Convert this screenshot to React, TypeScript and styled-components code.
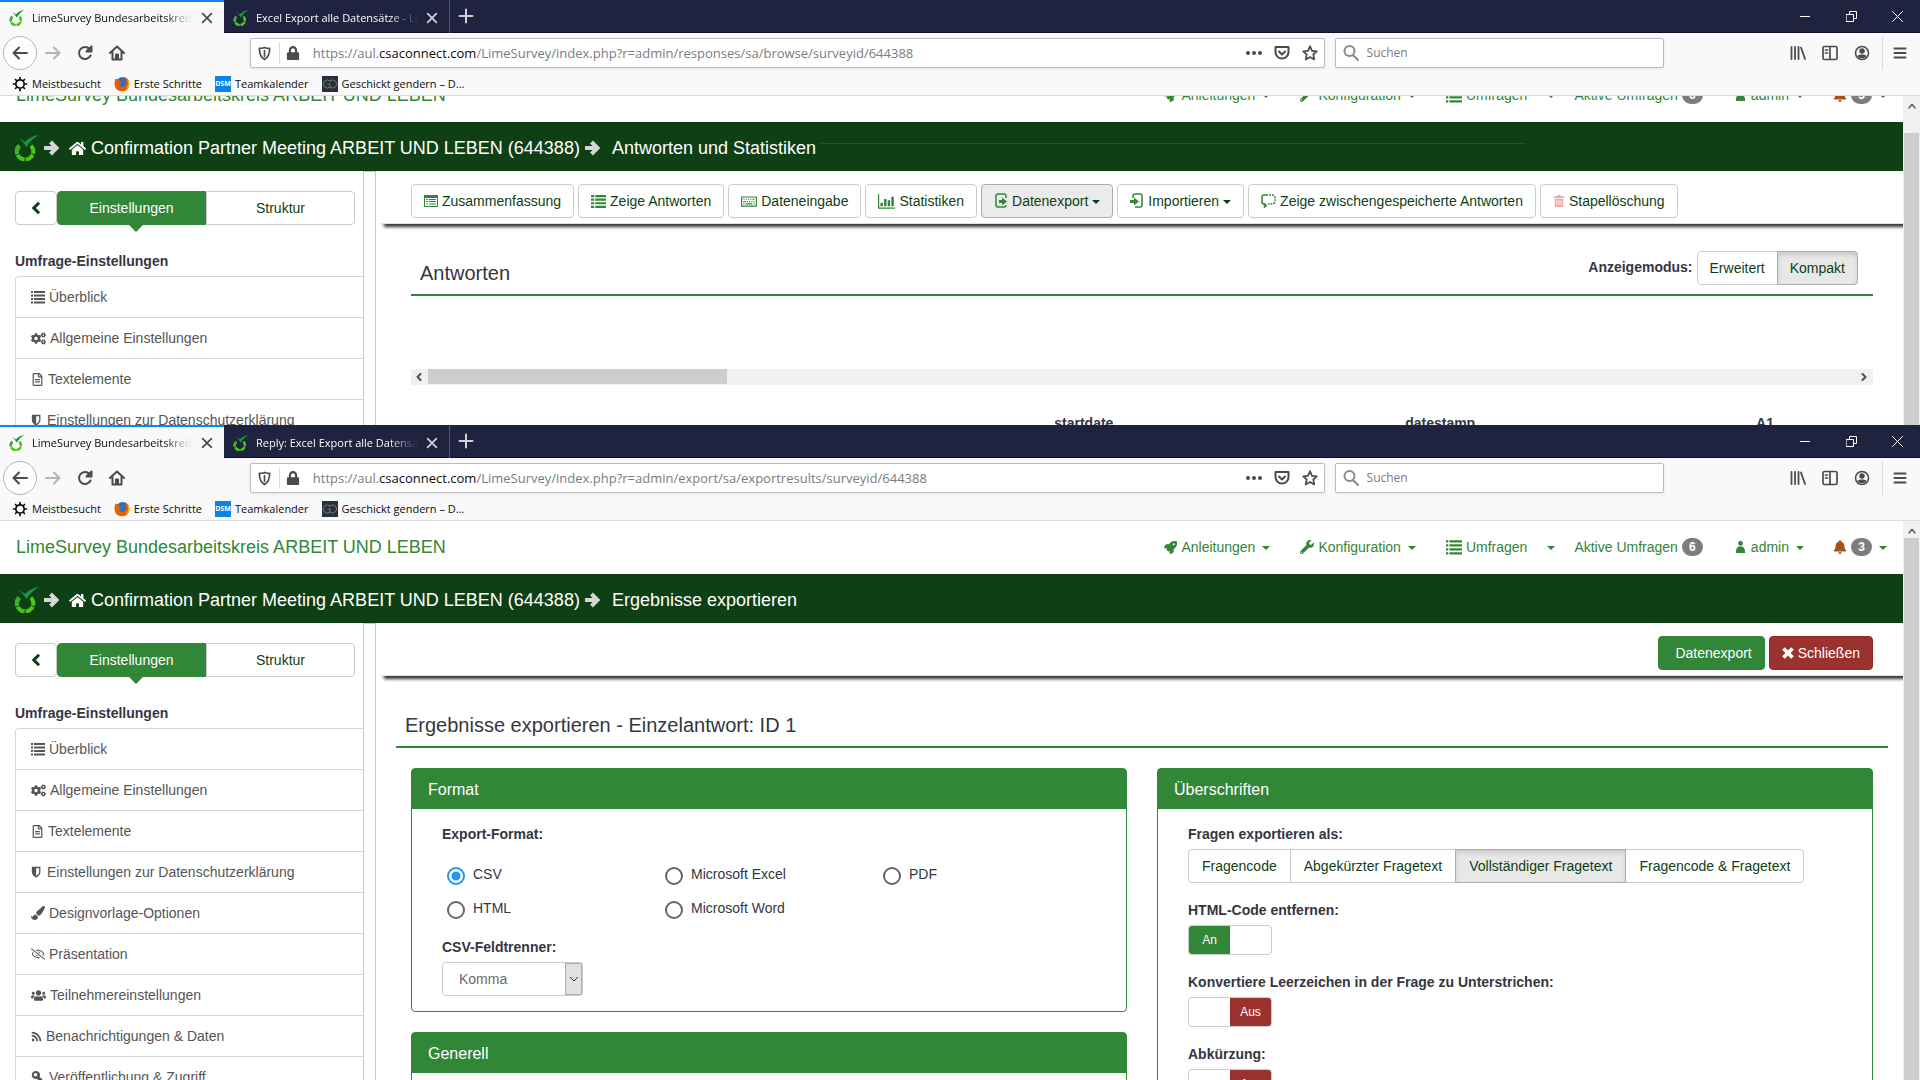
import React from "react";
import styled, { createGlobalStyle, css } from "styled-components";
import {
  FaCogs,
  FaRegFileAlt,
  FaPaintBrush,
  FaRegEyeSlash,
  FaUsers,
  FaRss,
  FaRocket,
  FaWrench,
  FaBell,
  FaHome,
  FaLock,
} from "react-icons/fa";

const green = "#328637";
const darkGreen = "#0f3f14";
const red = "#9c322e";

const GlobalStyle = createGlobalStyle`
  *, *::before, *::after { box-sizing: border-box; }
  body {
    margin: 0;
    background: #fff;
    color: #35363f;
    font: 14px/20px "Liberation Sans", Arial, sans-serif;
  }
  button, input, select { font: inherit; color: inherit; margin: 0; }
  svg { flex: none; display: block; }
  ul { list-style: none; margin: 0; padding: 0; }
`;

const Screen = styled.div`
  display: flex;
  flex-direction: column;
  height: 100vh;
  overflow: hidden;
`;

const Window = styled.section<{ $height?: string }>`
  flex: ${(p) => (p.$height ? `0 0 ${p.$height}` : "1 1 0")};
  min-height: 0;
  display: flex;
  flex-direction: column;
  overflow: hidden;
`;

/* ---------- browser chrome ---------- */

const Chrome = styled.div`
  flex: none;
  font-family: "Open Sans", "Noto Sans", sans-serif;
  color: #0c0c0d;
  background: #f9f9fa;
  border-bottom: 1px solid #dcdcde;
`;

const TabBar = styled.div`
  display: flex;
  height: 33px;
  background: #202340;
  border-bottom: 1px solid #0e1026;
`;

const Tab = styled.div<{ $active?: boolean }>`
  display: flex;
  align-items: center;
  gap: 7px;
  width: 226px;
  height: 33px;
  padding: 2px 10px 0 9px;
  font-size: 11px;
  border-right: 1px solid #555873;
  color: #f9f9fa;
  ${(p) =>
    p.$active &&
    css`
      width: 224px;
      background: #f9f9fa;
      color: #0c0c0d;
      border-right: 0;
      box-shadow: inset 0 2px 0 #0a84ff;
    `}
`;

const TabTitle = styled.button`
  flex: 1;
  min-width: 0;
  height: 24px;
  padding: 0;
  border: 0;
  background: none;
  text-align: left;
  white-space: nowrap;
  overflow: hidden;
  mask-image: linear-gradient(to right, #000 82%, transparent 100%);
`;

const PlainButton = styled.button<{ $width?: number; $color?: string }>`
  display: flex;
  align-items: center;
  justify-content: center;
  width: ${(p) => p.$width ?? 32}px;
  padding: 0;
  border: 0;
  background: none;
  color: ${(p) => p.$color ?? "#4a4a4f"};
`;

const WindowControls = styled.div`
  display: flex;
  margin-left: auto;
`;

const NavBar = styled.div`
  display: flex;
  align-items: center;
  height: 40px;
  padding: 0 3px;
`;

const BackButton = styled.button`
  display: flex;
  align-items: center;
  justify-content: center;
  width: 34px;
  height: 34px;
  padding: 0;
  border: 1px solid #b5b5b7;
  border-radius: 50%;
  background: #fdfdfd;
  color: #4a4a4f;
`;

const Field = styled.div<{ $grow: number }>`
  display: flex;
  align-items: center;
  flex: ${(p) => p.$grow} 1 0;
  min-width: 0;
  height: 30px;
  border: 1px solid #bcbcbe;
  border-radius: 2px;
  background: #fff;
  box-shadow: 0 1px 3px rgba(0, 0, 0, 0.08);
  font-size: 13px;
  color: #7c7c80;
`;

const Address = styled.span`
  flex: 1;
  min-width: 0;
  margin-left: 6px;
  white-space: nowrap;
  overflow: hidden;
  b {
    font-weight: 400;
    color: #0c0c0d;
  }
`;

const SearchInput = styled.input`
  flex: 1;
  min-width: 0;
  border: 0;
  padding: 0;
  outline: 0;
  background: none;
  font-size: 12px;
  &::placeholder {
    color: #7c7c80;
    opacity: 1;
  }
`;

const Rule = styled.span<{ $height: number }>`
  width: 1px;
  height: ${(p) => p.$height}px;
  background: #dcdcde;
`;

const Spacer = styled.div<{ $grow: number }>`
  flex: ${(p) => p.$grow} 1 0;
`;

const Bookmarks = styled.nav`
  display: flex;
  align-items: flex-start;
  gap: 13px;
  height: 22px;
  padding: 1px 12px 0;
  font-size: 11px;
  line-height: 20px;
`;

const Bookmark = styled.a`
  display: flex;
  align-items: center;
  gap: 4px;
  height: 19px;
  color: #0c0c0d;
  text-decoration: none;
`;

const TextBadge = styled.span<{ $bg: string; $fg: string }>`
  display: flex;
  align-items: center;
  justify-content: center;
  width: 16px;
  height: 16px;
  background: ${(p) => p.$bg};
  color: ${(p) => p.$fg};
  font-size: 7px;
  font-weight: 700;
`;

/* ---------- drawings ---------- */

const LimeLogo = ({ size }: { size: number }) => (
  <svg width={size} height={size} viewBox="0 0 26 27" fill="none">
    <path d="M5 11A8.500 8.500 0 1 0 17 11" stroke="#48c614" strokeWidth="4.200" strokeDasharray="9.250 1" />
    <path d="M5 11A8.500 8.500 0 0 0 2.600 18" stroke="#35b02c" strokeWidth="4.200" />
    <path d="M4.500 3 11 7Q17 1 25.500 0 17 4.500 12.500 12.500 9.500 7 4.500 3Z" fill="#149a3c" />
  </svg>
);

const Stroke = ({
  d,
  size = 16,
  width = 2,
  box = 16,
  sharp,
}: {
  d: string;
  size?: number;
  width?: number;
  box?: number;
  sharp?: boolean;
}) => (
  <svg
    width={size}
    height={size}
    viewBox={`0 0 ${box} ${box}`}
    fill="none"
    stroke="currentColor"
    strokeWidth={width}
    strokeLinecap={sharp ? "butt" : "round"}
    strokeLinejoin={sharp ? "miter" : "round"}
  >
    <path d={d} />
  </svg>
);

const Fill = ({ d, size = 14 }: { d: string; size?: number }) => (
  <svg width={size} height={size} viewBox="0 0 14 14" fill="currentColor" fillRule="evenodd">
    <path d={d} />
  </svg>
);

const paths = {
  list: "M0 1h2v2H0zM3 1h11v2H3zM0 4.500h2v2H0zM3 4.500h11v2H3zM0 8h2v2H0zM3 8h11v2H3zM0 11.500h2v2H0zM3 11.500h11v2H3z",
  thickList:
    "M0 1h3v2H0zM4 1h10v2H4zM0 4.300h3v2H0zM4 4.300h10v2H4zM0 7.600h3v2H0zM4 7.600h10v2H4zM0 11h3v2H0zM4 11h10v2H4z",
  table:
    "M0 1h14v12H0zM1 4v8h12V4zM2 5h2v1H2zM5 5h7v1H5zM2 7h2v1H2zM5 7h7v1H5zM2 9.500h2v1H2zM5 9.500h7v1H5z",
  keyboard:
    "M0 3h14v9H0zM1 4v7h12V4zM2 5h1v1H2zM4 5h1v1H4zM6 5h1v1H6zM8 5h1v1H8zM10 5h2v1h-2zM2 7h2v1H2zM5 7h1v1H5zM7 7h1v1H7zM9 7h1v1H9zM11 7h1v1h-1zM2 9h1v1H2zM4 9h6v1H4zM11 9h1v1h-1z",
  chart: "M0 1h1v11h13v1H0zM2 8h2v3H2zM5 5h2v6H5zM8 6h2v5H8zM11 3h2v8h-2z",
  shield: "M1 1h10v6c0 3-2 5-5 6.500C3 12 1 10 1 7zM6 2.500v9C8.500 10.200 9.500 8.800 9.500 7V2.500z",
  person: "M7 0a2.600 2.600 0 1 1 0 5.200A2.600 2.600 0 0 1 7 0zM5 6h4c2 1 3 3 3 7H2c0-4 1-6 3-7z",
  trash: "M5 0h4v1.500h4V3.500H1V1.500h4zM2 4.500h10V14H2zM4 6v6h1V6zM6.500 6v6h1V6zM9 6v6h1V6z",
  key: "M5 1a4 4 0 0 1 3.600 5.700L14 12l-2 2-1.500-1.500-1 1L8 12l-1-2-1-1.200A4 4 0 1 1 5 1zM4.500 3a1.800 1.800 0 1 0 0 3.600 1.800 1.800 0 0 0 0-3.600z",
};

const CrumbIcon = () => (
  <Stroke size={16} width={4} sharp d="M0 8h12M6.500 2l6 6-6 6" />
);

const ExportIcon = ({ back }: { back?: boolean }) => (
  <svg width="14" height="16" viewBox="0 0 14 16" fill="none" stroke={green} strokeWidth="1.500">
    <path d={back ? "M3 5V3a2 2 0 0 1 2-2h5a2 2 0 0 1 2 2v9a2 2 0 0 1-2 2H5" : "M12 5V3a2 2 0 0 0-2-2H4a2 2 0 0 0-2 2v9a2 2 0 0 0 2 2h6a2 2 0 0 0 2-2"} />
    <path d={back ? "M0 7h4V4.500L9 8.500 4 12.500V10H0z" : "M5 7h3V4.500l5 4-5 4V10H5z"} fill={green} stroke="none" />
  </svg>
);

const CommentIcon = () => (
  <svg width="15" height="16" viewBox="0 0 15 16" fill="none" stroke={green} strokeWidth="1.500">
    <path d="M5 11H3a2 2 0 0 1-2-2V4a2 2 0 0 1 2-2h2M3.500 11v3L6 12" />
    <path d="M5 2h7a2 2 0 0 1 2 2v4a3 3 0 0 1-3 3H7" strokeDasharray="2 1" />
  </svg>
);

const FirefoxIcon = () => (
  <svg width="16" height="16" viewBox="0 0 16 16">
    <circle cx="8.500" cy="7.500" r="6.500" fill="#2d6fc4" />
    <path d="M1.500 2.500C2.500 3.500 4 3 5.500 4 4.500 5 6 6 7.500 6.500 6.500 8 5 8 5.500 9.500c1.500 2.500 5 1.500 6-1C13 6 12 3.500 10.500 1c4 1.500 5.500 5 4.800 8.500A7.500 7.500 0 0 1 .600 9C.300 6.500 1 4.500 1.500 2.500z" fill="#e66000" />
    <path d="M13 3.500c2 3 1.500 7-1.500 9 3 0 4.500-3 4-5.500-.300-1.500-1-2.800-2.500-3.500z" fill="#ffb700" />
  </svg>
);

const CloseGlyph = () => <Stroke size={14} width={2} d="M3 3l10 10M13 3L3 13" />;

const BrowserChrome = ({ second, path }: { second: string; path: string }) => (
  <Chrome>
    <TabBar role="tablist">
      <Tab $active>
        <LimeLogo size={16} />
        <TabTitle role="tab" aria-selected="true">LimeSurvey Bundesarbeitskreis ARBEIT</TabTitle>
        <PlainButton $width={14} aria-label="Tab schließen"><CloseGlyph /></PlainButton>
      </Tab>
      <Tab>
        <LimeLogo size={16} />
        <TabTitle role="tab" aria-selected="false">{second}</TabTitle>
        <PlainButton $width={14} $color="#d0d0da" aria-label="Tab schließen"><CloseGlyph /></PlainButton>
      </Tab>
      <PlainButton $color="#d0d0da" aria-label="Neuer Tab">
        <Stroke d="M8 1.500v13M1.500 8h13" width={2} />
      </PlainButton>
      <WindowControls>
        <PlainButton $width={46} $color="#fff" aria-label="Minimieren">
          <Stroke size={10} width={1} box={10} d="M0 5.500h10" />
        </PlainButton>
        <PlainButton $width={46} $color="#fff" aria-label="Verkleinern">
          <Stroke size={11} width={1} box={11} d="M.500 3.500h7v7h-7zM3.500 3.500v-3h7v7h-3" />
        </PlainButton>
        <PlainButton $width={46} $color="#fff" aria-label="Schließen">
          <Stroke size={11} width={1} box={11} d="M.500.500l10 10M10.500.500l-10 10" />
        </PlainButton>
      </WindowControls>
    </TabBar>
    <NavBar>
      <BackButton aria-label="Zurück">
        <Stroke d="M15 8H1.500M7 2.500L1.500 8 7 13.500" />
      </BackButton>
      <PlainButton $color="#b4b4b6" aria-label="Vor">
        <Stroke d="M1 8h13.500M9 2.500L14.500 8 9 13.500" />
      </PlainButton>
      <PlainButton aria-label="Neu laden">
        <Stroke d="M13.500 10.500A6 6 0 1 1 12.500 4M14.500 1.500V6.500H9.500zM14 3l-3 3" />
      </PlainButton>
      <PlainButton aria-label="Startseite">
        <Stroke d="M1 8L8 1.500 15 8M3.500 7v7.500h9V7M7 14V9.500h2v4.500" />
      </PlainButton>
      <Spacer $grow={117} />
      <Field $grow={1074}>
        <PlainButton $width={28} aria-label="Schutz">
          <Stroke size={15} width={1.8} d="M8 1.500c2 1 3.500 1 5.500 1 0 6-1 9.500-5.500 12-4.500-2.500-5.500-6-5.500-12 2 0 3.500 0 5.500-1zM8 5v6" />
        </PlainButton>
        <Rule $height={22} />
        <PlainButton $width={27} aria-label="Verbindung">
          <FaLock size={14} />
        </PlainButton>
        <Address>
          https://aul.<b>csaconnect.com</b>
          {path}
        </Address>
        <PlainButton $width={28} aria-label="Seitenaktionen">
          <svg width="16" height="4" viewBox="0 0 16 4" fill="currentColor">
            <circle cx="2" cy="2" r="2" />
            <circle cx="8" cy="2" r="2" />
            <circle cx="14" cy="2" r="2" />
          </svg>
        </PlainButton>
        <PlainButton $width={28} aria-label="Pocket">
          <Stroke d="M1.500 2h13v5a6.500 6.500 0 0 1-13 0zM5 6.500l3 3 3-3" />
        </PlainButton>
        <PlainButton $width={28} aria-label="Lesezeichen">
          <Stroke d="M8 1.200l2 4.600 4.800.500-3.500 3.200 1 5L8 12l-4.300 2.500 1-5L1.200 6.300 6 5.800z" width={1.7} />
        </PlainButton>
      </Field>
      <Spacer $grow={10} />
      <Field $grow={328}>
        <PlainButton $width={31} $color="#8a8a8e" aria-label="Suche starten">
          <Stroke d="M6.500 1a5 5 0 1 1 0 10 5 5 0 0 1 0-10zM10 10l5 5" />
        </PlainButton>
        <SearchInput aria-label="Suchen" placeholder="Suchen" />
      </Field>
      <Spacer $grow={118} />
      <PlainButton aria-label="Bibliothek">
        <Stroke d="M1.500 2v12M5 2v12M8.500 2v12M11 2.500l4 11.500" width={1.8} />
      </PlainButton>
      <PlainButton aria-label="Seitenleiste">
        <Stroke d="M2.500 1.500h11a1.500 1.500 0 0 1 1.500 1.500v10a1.500 1.500 0 0 1-1.500 1.500h-11A1.500 1.500 0 0 1 1 13V3a1.500 1.500 0 0 1 1.500-1.500zM8 2v12M3.500 5h2M3.500 8h2" width={1.7} />
      </PlainButton>
      <PlainButton aria-label="Konto">
        <svg width="16" height="16" viewBox="0 0 16 16">
          <circle cx="8" cy="8" r="6.500" fill="none" stroke="currentColor" strokeWidth="1.500" />
          <circle cx="8" cy="6" r="2.700" fill="currentColor" />
          <path d="M3.500 11c1-2 8-2 9 0-2 3-7 3-9 0z" fill="currentColor" />
        </svg>
      </PlainButton>
      <Spacer $grow={4} />
      <Rule $height={34} />
      <PlainButton $width={34} aria-label="Menü">
        <Stroke d="M2.500 3.500h11M2.500 8h11M2.500 12.500h11" />
      </PlainButton>
    </NavBar>
    <Bookmarks>
      <Bookmark href="#">
        <Stroke size={16} width={1.7} d="M8 3.800a4.200 4.200 0 1 1 0 8.400 4.200 4.200 0 0 1 0-8.400zM8 1.500v2M8 12.500v2M1.500 8h2M12.500 8h2M3.500 3.500l1 1M11.500 11.500l1 1M3.500 12.500l1-1M11.500 4.500l1-1" />
        Meistbesucht
      </Bookmark>
      <Bookmark href="#">
        <FirefoxIcon />
        Erste Schritte
      </Bookmark>
      <Bookmark href="#">
        <TextBadge $bg="#0a84e8" $fg="#fff">DSM</TextBadge>
        Teamkalender
      </Bookmark>
      <Bookmark href="#">
        <TextBadge $bg="#2b2f3a" $fg="#6d7f80">
          <Stroke d="M8 5a4 4 0 1 0 0 6V8H6M8 5a4 4 0 1 1 0 6" width={1} />
        </TextBadge>
        Geschickt gendern – D...
      </Bookmark>
    </Bookmarks>
  </Chrome>
);

/* ---------- page frame ---------- */

const Viewport = styled.div`
  flex: 1;
  min-height: 0;
  display: flex;
  overflow: hidden;
`;

const Page = styled.div<{ $scrolled?: boolean }>`
  flex: 1;
  min-width: 0;
  display: flex;
  flex-direction: column;
  overflow: hidden;
  margin-top: ${(p) => (p.$scrolled ? -27 : 0)}px;
`;

const ScrollTrack = styled.div<{ $gap: number }>`
  display: flex;
  flex-direction: column;
  align-items: center;
  width: 17px;
  padding: 4px 1px 0;
  background: #f0f0f0;
  color: #505050;
  &::after {
    content: "";
    flex: 1;
    width: 100%;
    margin-top: ${(p) => p.$gap}px;
    background: #cdcdcd;
  }
`;

const TopNav = styled.header`
  flex: none;
  display: flex;
  align-items: center;
  justify-content: space-between;
  height: 53px;
  padding: 0 1px 1px 16px;
  color: ${green};
`;

const Brand = styled.a`
  font-size: 18px;
  color: ${green};
  text-decoration: none;
`;

const NavItems = styled.ul`
  display: flex;
`;

const NavItem = styled.li<{ $pad?: number }>`
  padding: 0 ${(p) => p.$pad ?? 15}px;
`;

const NavLink = styled.a`
  display: flex;
  align-items: center;
  gap: 4px;
  min-height: 20px;
  color: ${green};
  text-decoration: none;
`;

const Caret = styled.span`
  border: 4px solid transparent;
  border-top-color: currentColor;
  border-bottom: 0;
  margin: 2px 0 0 3px;
`;

const ButtonCaret = styled(Caret)`
  margin-left: 0;
`;

const Count = styled.span`
  min-width: 21px;
  padding: 3px 7px;
  border-radius: 10px;
  background: #7d7d7d;
  color: #fff;
  font-size: 12px;
  line-height: 12px;
  font-weight: 700;
  text-align: center;
`;

const Crumbs = styled.div`
  flex: none;
  display: flex;
  align-items: center;
  height: 49px;
  padding: 3px 0 0 14px;
  background: ${darkGreen};
  color: #fff;
  font-size: 18px;
  white-space: nowrap;
`;

const Crumb = styled.a<{ $left: number }>`
  display: flex;
  align-items: center;
  gap: 5px;
  padding: 0 5px 0 ${(p) => p.$left}px;
  color: #fff;
  text-decoration: none;
`;

const CrumbArrow = styled.span<{ $left?: number }>`
  padding-left: ${(p) => p.$left ?? 0}px;
  color: #d6d6d6;
`;

const Seam = styled.hr`
  flex: 1;
  align-self: flex-start;
  height: 1px;
  margin: 18px 20% 0 0;
  border: 0;
  background: #24552a;
`;

const Columns = styled.div`
  flex: 1;
  display: flex;
  min-height: 0;
`;

const Sidebar = styled.aside`
  flex: none;
  width: 363px;
  padding: 20px 0 0 15px;
`;

const Handle = styled.div`
  flex: none;
  width: 13px;
  border: 1px solid #c8c8ca;
  border-bottom: 0;
`;

const SwitchRow = styled.div`
  display: flex;
  margin-right: 8px;
`;

const SideButton = styled.button<{ $active?: boolean; $fixed?: boolean }>`
  position: relative;
  display: flex;
  align-items: center;
  justify-content: center;
  flex: ${(p) => (p.$fixed ? "0 0 42px" : "1 1 0")};
  height: 34px;
  padding: 0;
  border: 1px solid ${(p) => (p.$active ? green : "#ccc")};
  border-radius: ${(p) => (p.$fixed ? "4px" : p.$active ? "4px 0 0 4px" : "0 4px 4px 0")};
  background: ${(p) => (p.$active ? green : "#fff")};
  color: ${(p) => (p.$active ? "#fff" : "#0f3f14")};
  &::after {
    content: "";
    display: ${(p) => (p.$active ? "block" : "none")};
    position: absolute;
    top: 100%;
    left: calc(50% - 4px);
    border: 8px solid transparent;
    border-top-color: ${green};
    border-bottom: 0;
  }
`;

const SideHeading = styled.h2`
  margin: 26px 0 5px;
  font-size: 14px;
  line-height: 20px;
`;

const SideList = styled.ul`
  border: 1px solid #d6d6d6;
  border-right: 0;
  border-top-left-radius: 4px;
`;

const SideLink = styled.a`
  display: flex;
  align-items: center;
  gap: 4px;
  height: 41px;
  padding-left: 15px;
  border-bottom: 1px solid #d6d6d6;
  color: #555;
  text-decoration: none;
`;

const Main = styled.main`
  flex: 1;
  min-width: 0;
  overflow: hidden;
`;

const Toolbar = styled.div<{ $end?: boolean }>`
  display: flex;
  gap: 4px;
  justify-content: ${(p) => (p.$end ? "flex-end" : "flex-start")};
  height: 53px;
  margin-left: 5px;
  padding: 13px 30px 0;
  border-bottom: 1px solid #dfe0e6;
  box-shadow: 3px 3px 3px #35363f;
`;

const Button = styled.button<{ $tone?: "active" | "green" | "red" }>`
  display: flex;
  align-items: center;
  gap: 4px;
  height: 34px;
  padding: 0 12px;
  border: 1px solid #ccc;
  border-radius: 4px;
  background: #fff;
  color: ${darkGreen};
  white-space: nowrap;
  ${(p) => p.$tone === "active" && "background: #ebebeb; border-color: #adadad;"}
  ${(p) => p.$tone === "green" && `background: ${green}; border-color: ${green}; color: #fff; padding-left: 16px;`}
  ${(p) => p.$tone === "red" && `background: ${red}; border-color: #8a2b28; color: #fff;`}
`;

const Tint = styled.span<{ $faded?: boolean }>`
  color: ${(p) => (p.$faded ? "#e8a9a9" : green)};
`;

const Segment = styled.button<{ $on?: boolean }>`
  height: 34px;
  margin-right: -1px;
  padding: 0 12px;
  border: 1px solid ${(p) => (p.$on ? "#adadad" : "#ccc")};
  background: ${(p) => (p.$on ? "#e8e8e8" : "#fff")};
  color: ${darkGreen};
  white-space: nowrap;
  box-shadow: ${(p) => (p.$on ? "inset 0 3px 5px rgba(0, 0, 0, 0.125)" : "none")};
  z-index: ${(p) => (p.$on ? 1 : 0)};
  &:first-child {
    border-radius: 4px 0 0 4px;
  }
  &:last-child {
    margin-right: 0;
    border-radius: 0 4px 4px 0;
  }
`;

const Segments = styled.div<{ $roomy?: boolean }>`
  display: flex;
  ${Segment} {
    padding: 0 ${(p) => (p.$roomy ? 13 : 12)}px;
  }
`;

const Content = styled.div<{ $wide?: boolean }>`
  padding: 27px ${(p) => (p.$wide ? "15px 0 20px" : "30px 0 35px")};
`;

const TitleRow = styled.div`
  display: flex;
  justify-content: space-between;
  height: 45px;
  padding: 0 15px 0 9px;
  border-bottom: 2px solid ${green};
`;

const Title = styled.h1`
  margin: 11px 0 0;
  font-size: 20px;
  line-height: 22px;
  font-weight: 400;
`;

const Mode = styled.div`
  display: flex;
  gap: 4px;
  font-weight: 700;
  line-height: 32px;
  ${Segment} {
    font-weight: 400;
  }
`;

const SideScroll = styled.div`
  display: flex;
  align-items: center;
  height: 16px;
  margin: 73px 0 28px;
  padding: 0 5px 0 4px;
  background: #f0f0f0;
  color: #505050;
`;

const SideThumb = styled.div`
  flex: 0 0 299px;
  height: 16px;
  margin: 0 auto 0 5px;
  border-bottom: 1px solid #f0f0f0;
  background: #cdcdcd;
`;

const Answers = styled.table`
  width: 100%;
  table-layout: fixed;
  border-collapse: collapse;
  th {
    padding: 0;
    text-align: left;
  }
`;

const Panels = styled.div`
  display: grid;
  grid-template-columns: 1fr 1fr;
  gap: 30px;
  padding: 20px 15px 0;
`;

const Panel = styled.section`
  margin-bottom: 20px;
  border: 1px solid ${green};
  border-radius: 4px;
`;

const PanelHead = styled.h2`
  margin: 0;
  padding: 11px 16px 9px;
  background: ${green};
  color: #fff;
  font-size: 16px;
  line-height: 20px;
  font-weight: 400;
`;

const PanelBody = styled.div`
  display: flex;
  flex-direction: column;
  gap: 17px;
  padding: 15px 30px;
`;

const FormRow = styled.div`
  display: flex;
  flex-direction: column;
  align-items: flex-start;
  gap: 5px;
`;

const Label = styled.label`
  font-weight: 700;
`;

const RadioGrid = styled.div`
  display: grid;
  grid-template-columns: repeat(3, 218px);
  gap: 12px 0;
  padding-top: 15px;
`;

const RadioLabel = styled.label`
  display: flex;
  height: 22px;
`;

const Radio = styled.input`
  appearance: none;
  flex: none;
  width: 18px;
  height: 18px;
  margin: 3px 8px 0 5px;
  border: 2px solid #666;
  border-radius: 50%;
  &:checked {
    border-color: #2196f3;
    background: radial-gradient(circle, #2196f3 4px, #fff 5px);
  }
`;

const SelectBox = styled.div`
  display: flex;
  height: 34px;
  position: relative;
  width: 141px;
`;

const Select = styled.select`
  appearance: none;
  width: 100%;
  padding: 0 16px;
  border: 1px solid #ccc;
  border-radius: 4px;
  background: #fff;
  color: #6b6b6b;
`;

const SelectArrow = styled.span`
  position: absolute;
  top: 1px;
  right: 1px;
  bottom: 1px;
  display: flex;
  align-items: center;
  justify-content: center;
  width: 17px;
  border: 1px solid #adadad;
  background: #e1e1e1;
  pointer-events: none;
`;

const Toggle = styled.button<{ $on: boolean }>`
  display: flex;
  justify-content: ${(p) => (p.$on ? "flex-start" : "flex-end")};
  width: 84px;
  height: 30px;
  padding: 0;
  border: 1px solid #ccc;
  border-radius: 4px;
  background: #fff;
  overflow: hidden;
  span {
    width: 41px;
    background: ${(p) => (p.$on ? green : red)};
    color: #fff;
    font-size: 12px;
    line-height: 28px;
  }
`;

const sideItems = [
  { icon: <Fill d={paths.list} />, label: "Überblick" },
  { icon: <FaCogs size={15} />, label: "Allgemeine Einstellungen" },
  { icon: <FaRegFileAlt size={13} />, label: "Textelemente" },
  { icon: <Fill d={paths.shield} size={12} />, label: "Einstellungen zur Datenschutzerklärung" },
  { icon: <FaPaintBrush size={14} />, label: "Designvorlage-Optionen" },
  { icon: <FaRegEyeSlash size={14} />, label: "Präsentation" },
  { icon: <FaUsers size={15} />, label: "Teilnehmereinstellungen" },
  { icon: <FaRss size={11} />, label: "Benachrichtigungen & Daten" },
  { icon: <Fill d={paths.key} />, label: "Veröffentlichung & Zugriff" },
];

const Frame = ({
  scrolled,
  crumb,
  items,
  children,
}: {
  scrolled?: boolean;
  crumb: string;
  items: typeof sideItems;
  children: React.ReactNode;
}) => (
  <Viewport>
    <Page $scrolled={scrolled}>
      <TopNav>
        <Brand href="#">LimeSurvey Bundesarbeitskreis ARBEIT UND LEBEN</Brand>
        <NavItems>
          <NavItem><NavLink href="#"><FaRocket size={13} />Anleitungen<Caret /></NavLink></NavItem>
          <NavItem><NavLink href="#"><FaWrench size={14} />Konfiguration<Caret /></NavLink></NavItem>
          <NavItem><NavLink href="#"><Fill d={paths.list} size={16} />Umfragen</NavLink></NavItem>
          <NavItem $pad={2}><NavLink href="#" aria-label="Umfragen öffnen"><Caret /></NavLink></NavItem>
          <NavItem $pad={17}><NavLink href="#">Aktive Umfragen<Count>6</Count></NavLink></NavItem>
          <NavItem $pad={14}><NavLink href="#"><Fill d={paths.person} size={13} />admin<Caret /></NavLink></NavItem>
          <NavItem><NavLink href="#"><FaBell size={14} color="#a8511f" /><Count>3</Count><Caret /></NavLink></NavItem>
        </NavItems>
      </TopNav>
      <Crumbs>
        <LimeLogo size={26} />
        <CrumbArrow $left={4}><CrumbIcon /></CrumbArrow>
        <Crumb href="#" $left={9}><FaHome size={17} />Confirmation Partner Meeting ARBEIT UND LEBEN (644388)</Crumb>
        <CrumbArrow><CrumbIcon /></CrumbArrow>
        <Crumb href="#" $left={11}>{crumb}</Crumb>
        {scrolled && <Seam />}
      </Crumbs>
      <Columns>
        <Sidebar>
          <SwitchRow>
            <SideButton $fixed aria-label="Einklappen">
              <Stroke size={14} width={3.5} sharp d="M11.500 2L5.500 8l6 6" />
            </SideButton>
            <SideButton $active>Einstellungen</SideButton>
            <SideButton>Struktur</SideButton>
          </SwitchRow>
          <SideHeading>Umfrage-Einstellungen</SideHeading>
          <SideList>
            {items.map((item) => (
              <li key={item.label}>
                <SideLink href="#">{item.icon}{item.label}</SideLink>
              </li>
            ))}
          </SideList>
        </Sidebar>
        <Handle />
        <Main>{children}</Main>
      </Columns>
    </Page>
    <ScrollTrack $gap={scrolled ? 21 : 1}>
      <Stroke size={12} width={2} d="M4 10.500l4-4.500 4 4.500" />
    </ScrollTrack>
  </Viewport>
);

const AnswersView = () => (
  <>
    <Toolbar>
      <Button><Tint><Fill d={paths.table} /></Tint>Zusammenfassung</Button>
      <Button><Tint><Fill d={paths.thickList} size={15} /></Tint>Zeige Antworten</Button>
      <Button><Tint><Fill d={paths.keyboard} size={16} /></Tint>Dateneingabe</Button>
      <Button><Tint><Fill d={paths.chart} size={17} /></Tint>Statistiken</Button>
      <Button $tone="active"><ExportIcon />Datenexport<ButtonCaret /></Button>
      <Button><ExportIcon back />Importieren<ButtonCaret /></Button>
      <Button><CommentIcon />Zeige zwischengespeicherte Antworten</Button>
      <Button><Tint $faded><Fill d={paths.trash} size={12} /></Tint>Stapellöschung</Button>
    </Toolbar>
    <Content>
      <TitleRow>
        <Title>Antworten</Title>
        <Mode>
          Anzeigemodus:
          <Segments>
            <Segment>Erweitert</Segment>
            <Segment $on>Kompakt</Segment>
          </Segments>
        </Mode>
      </TitleRow>
      <SideScroll>
        <Stroke size={8} box={8} width={2} d="M5.500 1l-3 3 3 3" />
        <SideThumb />
        <Stroke size={8} box={8} width={2} d="M2.500 1l3 3-3 3" />
      </SideScroll>
      <Answers>
        <colgroup>
          <col width="44%" />
          <col width="24%" />
          <col width="24%" />
          <col />
        </colgroup>
        <thead>
          <tr>
            <th />
            <th>startdate</th>
            <th>datestamp</th>
            <th>A1</th>
          </tr>
        </thead>
      </Answers>
    </Content>
  </>
);

const formats = ["CSV", "Microsoft Excel", "PDF", "HTML", "Microsoft Word"];
const toggles = [
  { id: "strip", label: "HTML-Code entfernen:", on: true },
  { id: "convert", label: "Konvertiere Leerzeichen in der Frage zu Unterstrichen:", on: false },
  { id: "abbrev", label: "Abkürzung:", on: false },
];

const ExportView = () => (
  <>
    <Toolbar $end>
      <Button $tone="green">Datenexport</Button>
      <Button $tone="red">
        <Stroke size={12} width={5} sharp d="M2 2l12 12M14 2L2 14" />
        Schließen
      </Button>
    </Toolbar>
    <Content $wide>
      <TitleRow>
        <Title>Ergebnisse exportieren - Einzelantwort: ID 1</Title>
      </TitleRow>
      <Panels>
        <div>
          <Panel>
            <PanelHead>Format</PanelHead>
            <PanelBody>
              <FormRow>
                <Label as="span">Export-Format:</Label>
                <RadioGrid>
                  {formats.map((format) => (
                    <RadioLabel key={format}>
                      <Radio type="radio" name="format" defaultChecked={format === "CSV"} />
                      {format}
                    </RadioLabel>
                  ))}
                </RadioGrid>
              </FormRow>
              <FormRow>
                <Label htmlFor="separator">CSV-Feldtrenner:</Label>
                <SelectBox>
                  <Select id="separator"><option>Komma</option></Select>
                  <SelectArrow><Stroke size={8} box={8} width={1} d="M0 2l4 4 4-4" /></SelectArrow>
                </SelectBox>
              </FormRow>
            </PanelBody>
          </Panel>
          <Panel>
            <PanelHead>Generell</PanelHead>
            <PanelBody />
          </Panel>
        </div>
        <Panel>
          <PanelHead>Überschriften</PanelHead>
          <PanelBody>
            <FormRow>
              <Label as="span">Fragen exportieren als:</Label>
              <Segments $roomy>
                <Segment>Fragencode</Segment>
                <Segment>Abgekürzter Fragetext</Segment>
                <Segment $on>Vollständiger Fragetext</Segment>
                <Segment>Fragencode &amp; Fragetext</Segment>
              </Segments>
            </FormRow>
            {toggles.map((t) => (
              <FormRow key={t.id}>
                <Label htmlFor={t.id}>{t.label}</Label>
                <Toggle id={t.id} role="switch" aria-checked={t.on} $on={t.on}>
                  <span>{t.on ? "An" : "Aus"}</span>
                </Toggle>
              </FormRow>
            ))}
          </PanelBody>
        </Panel>
      </Panels>
    </Content>
  </>
);

export default function App() {
  return (
    <Screen>
      <GlobalStyle />
      <Window $height="425px">
        <BrowserChrome
          second="Excel Export alle Datensätze - LimeSurvey"
          path="/LimeSurvey/index.php?r=admin/responses/sa/browse/surveyid/644388"
        />
        <Frame scrolled crumb="Antworten und Statistiken" items={sideItems.slice(0, 4)}>
          <AnswersView />
        </Frame>
      </Window>
      <Window>
        <BrowserChrome
          second="Reply: Excel Export alle Datensätze"
          path="/LimeSurvey/index.php?r=admin/export/sa/exportresults/surveyid/644388"
        />
        <Frame crumb="Ergebnisse exportieren" items={sideItems}>
          <ExportView />
        </Frame>
      </Window>
    </Screen>
  );
}
